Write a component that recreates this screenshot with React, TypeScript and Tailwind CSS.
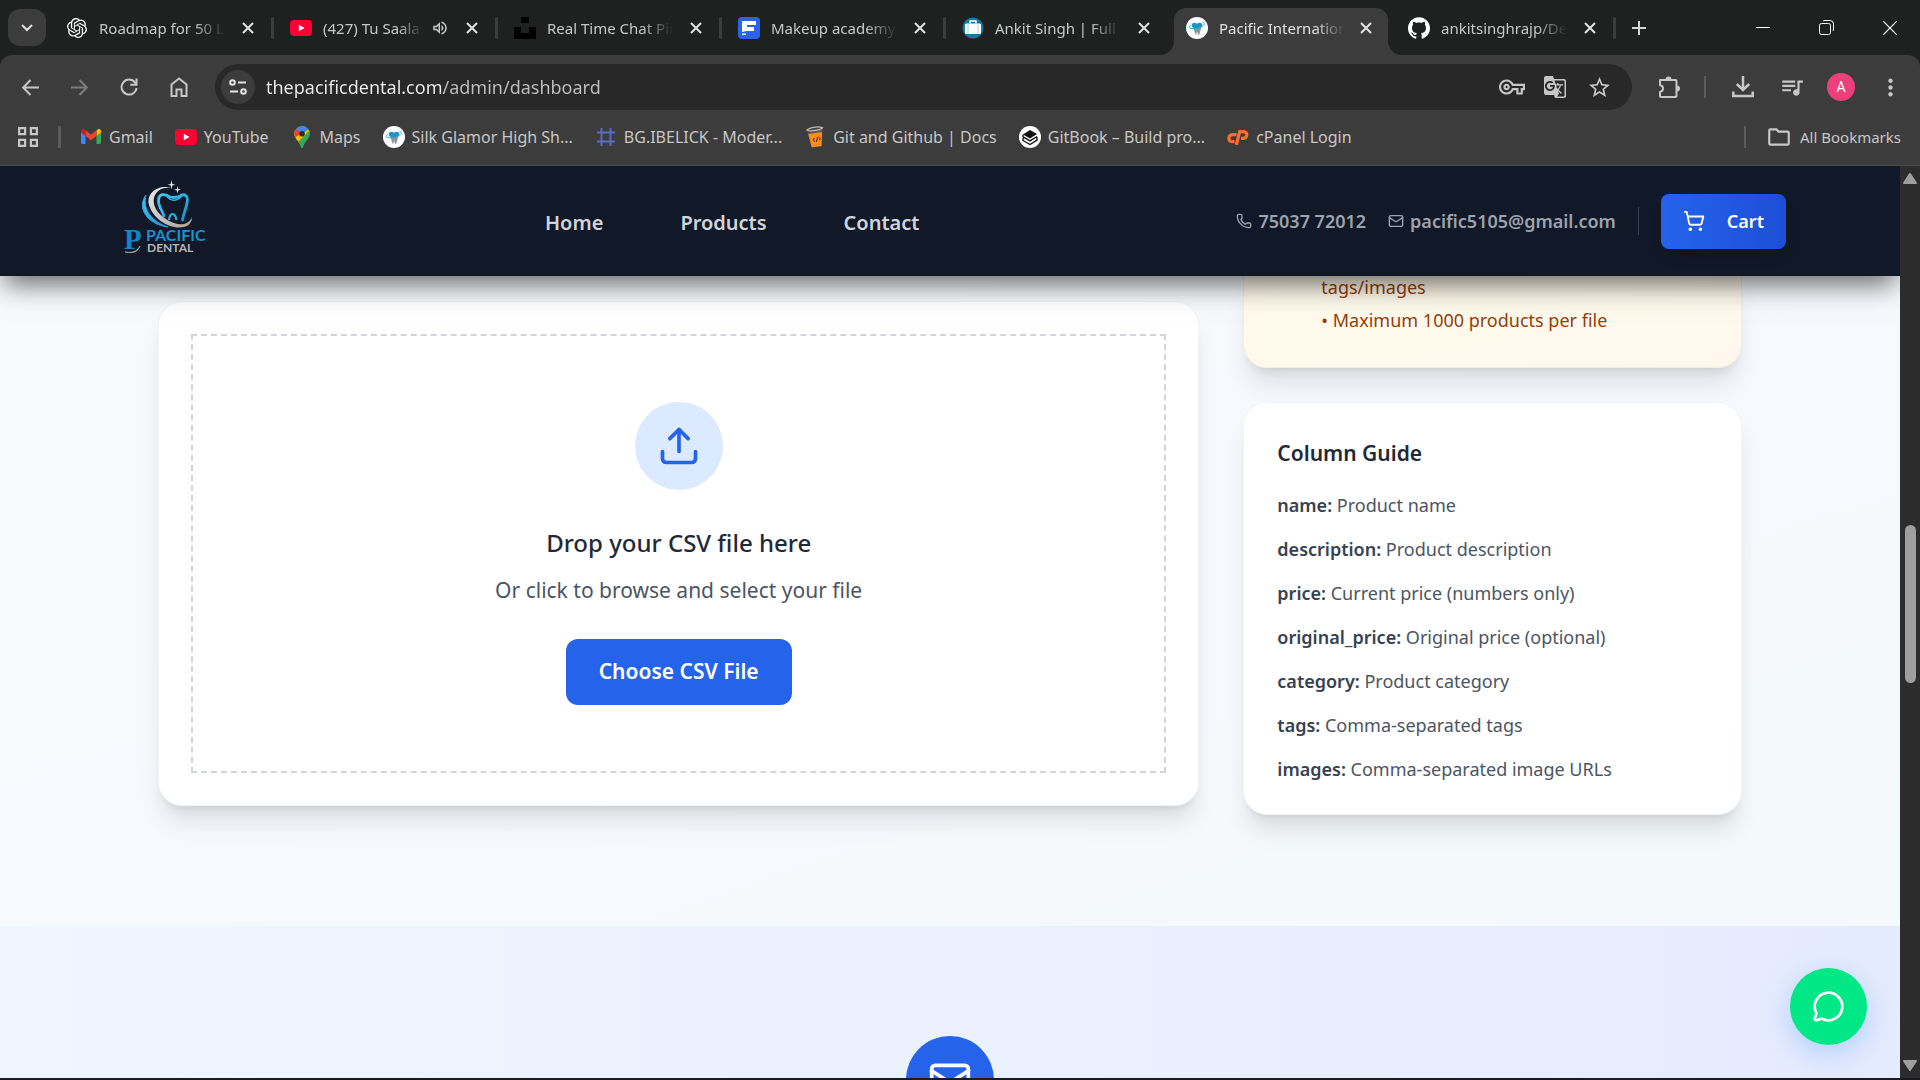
import type { ReactNode } from "react";
import { Mail, MessageCircle, Phone, ShoppingCart, Upload } from "lucide-react";
import {
  MdGTranslate,
  MdMoreVert,
  MdOutlineFolder,
  MdOutlineQueueMusic,
  MdOutlineVolumeUp,
  MdOutlineVpnKey,
  MdStarBorder,
} from "react-icons/md";
import { SiGithub, SiOpenai } from "react-icons/si";

function YouTubeIcon() {
  return (
    <svg viewBox="0 0 22 16" className="w-[22px]">
      <rect width="22" height="16" rx="4" fill="#ff0033" />
      <path d="M8.8 4.7v6.6L14.6 8z" fill="#fff" />
    </svg>
  );
}

function ToothIcon() {
  return (
    <svg viewBox="0 0 22 22" className="w-[22px]">
      <circle cx="11" cy="11" r="11" fill="#fff" />
      <path d="M7 9.500c1.500 1 6.500 1 8.500-.5-.4 3-1.200 5-2 8-.6 1.500-1.500 1-1.700-.5-.2-1.500-1-2-1.300 0-.1 1.600-1 1.500-1.300.2C8.700 14 7.400 12 7 9.500z" fill="#8f9499" />
      <path d="M6 9.500C5 5.800 8.200 5 11 6.700c2.800-1.700 6-.7 5.200 2-1.400 3.200-7.600 4-10.200.8z" fill="#2192c3" />
      <path d="M16.500 5.200c2 .5 2.400 1.800 1 3.200-2.500 2.500-9 4-13 3-1.800-.5-1.400-2 .6-3.200" fill="none" stroke="#2fa6d6" strokeWidth="1" />
    </svg>
  );
}

function UnsplashIcon() {
  return (
    <svg viewBox="0 0 22 22" className="w-[22px]">
      <path d="M7 0h8v6H7zM0 10h7v6h8v-6h7v12H0z" fill="#000" />
    </svg>
  );
}

function BlueFIcon() {
  return (
    <svg viewBox="0 0 22 22" className="w-[22px]">
      <rect width="22" height="22" rx="4" fill="#2f62ea" />
      <path d="M4 4h14v4H9v2h7v4H8.500L4 15zM4 16.500h4V18H4z" fill="#fff" />
    </svg>
  );
}

function BriefcaseIcon() {
  return (
    <svg viewBox="0 0 22 22" className="w-[22px]">
      <circle cx="11" cy="11" r="10.500" fill="#12799f" />
      <rect x="3" y="6.500" width="16" height="10.500" rx="1.500" fill="#fff" />
      <path d="M8 6.500V4h6v2.500" fill="none" stroke="#fff" strokeWidth="1.500" />
      <path d="M6 6.500V17M16 6.500V17" stroke="#8cc6de" strokeWidth="0.800" />
    </svg>
  );
}

function GmailIcon() {
  return (
    <svg viewBox="0 0 20 15" className="w-5">
      <path d="M0 2v11.500C0 14.400.6 15 1.500 15h3V7z" fill="#4285f4" />
      <path d="M20 2v11.500c0 .9-.6 1.500-1.500 1.500h-3V7z" fill="#34a853" />
      <path d="M15.500 1.300V7L20 3.600V2c0-1.800-2-2.500-3.300-1.500z" fill="#fbbc04" />
      <path d="M4.500 7V1.300L10 5.500l5.500-4.200V7L10 11.200z" fill="#ea4335" />
      <path d="M0 2v1.600L4.500 7V1.300L3.300.5C2-.5 0 .2 0 2z" fill="#c5221f" />
    </svg>
  );
}

function MapsIcon() {
  return (
    <svg viewBox="0 0 16 22" className="w-4">
      <defs>
        <clipPath id="pin">
          <path d="M8 0a7.700 7.700 0 0 1 7.700 7.700c0 5-5.200 7.300-6.700 13.300-.3 1.300-1.700 1.300-2 0C5.500 15 .3 12.700.3 7.700A7.700 7.700 0 0 1 8 0z" />
        </clipPath>
      </defs>
      <g clipPath="url(#pin)">
        <rect width="16" height="22" fill="#34a853" />
        <path d="M0 4L8 8 0 17z" fill="#fbbc04" />
        <path d="M16 2v3L5 17l-3-4z" fill="#fbbc04" />
        <path d="M16 4v18H7l-3-6z" fill="#34a853" />
        <path d="M0 12V2l4 1 4 4z" fill="#ea4335" />
        <path d="M2 3L8 0h6l1 2-7 6z" fill="#4285f4" />
      </g>
      <circle cx="8" cy="7.700" r="2.800" fill="#2b2b2b" />
    </svg>
  );
}

function HashIcon() {
  return (
    <svg viewBox="0 0 18 18" className="w-[18px]" fill="none" stroke="#5c6bc0" strokeWidth="2">
      <path d="M4.500 0v18M13.500 0v18M0 4.500h18M0 13.500h18" />
    </svg>
  );
}

function CupIcon() {
  return (
    <svg viewBox="0 0 18 22" className="w-[18px]">
      <path d="M1 4l4.500 17.500L16 20.500l.8-18.500z" fill="#57534e" />
      <path d="M2.300 8L16 6l-.5 14-9.700 1.300z" fill="#fb8c1e" />
      <path d="M1 4.200C3 1.500 12 0 16.700 1.700c-2 2.500-11 4-15.700 2.500z" fill="none" stroke="#bdbdbd" strokeWidth="1.200" />
      <path d="M8.500 12l-1.500 2 2 1.500M12.500 11l2 1.500-1.500 2M11.500 11l-1 5" fill="none" stroke="#4a2b0a" />
    </svg>
  );
}

function GitBookIcon() {
  return (
    <svg viewBox="0 0 22 22" className="w-[22px]">
      <circle cx="11" cy="11" r="11" fill="#fff" />
      <path d="M4 8.500L11 4l7 4-7 4.500z" fill="#111" />
      <path d="M4 8.500v2.300l7 4 7-4.300M4 12v2.500l7 4 7-4.300V11" fill="none" stroke="#111" strokeWidth="1.400" strokeLinejoin="round" />
    </svg>
  );
}

function CPanelIcon() {
  return (
    <svg viewBox="0 0 22 16" className="w-[22px]" fill="none" stroke="#ff6c2c" strokeWidth="3.200">
      <path d="M9.500 5.600H5.800C1 5.600 0.400 12.600 5 12.600h2.500" />
      <path d="M9.300 16L12.700 2.600H16.500C21.500 2.600 20.400 9.400 16 9.400h-2" />
    </svg>
  );
}

type Tab = { title: string; icon: ReactNode; audio?: boolean; active?: boolean; divider?: boolean };

const tabs: Tab[] = [
  { title: "Roadmap for 50 LPA", icon: <SiOpenai className="size-5 text-white" />, divider: true },
  { title: "(427) Tu Saala Kaam", icon: <YouTubeIcon />, audio: true, divider: true },
  { title: "Real Time Chat Pin", icon: <UnsplashIcon />, divider: true },
  { title: "Makeup academy site", icon: <BlueFIcon />, divider: true },
  { title: "Ankit Singh | Full Stack", icon: <BriefcaseIcon /> },
  { title: "Pacific International", icon: <ToothIcon />, active: true },
  { title: "ankitsinghrajp/Dental", icon: <SiGithub className="size-[22px] text-white" />, divider: true },
];

function CloseGlyph() {
  return (
    <svg viewBox="0 0 12 12" className="size-3" stroke="currentColor" strokeWidth="2" fill="none">
      <path d="M1 1l10 10M11 1L1 11" />
    </svg>
  );
}

function Flare({ side }: { side: "left" | "right" }) {
  return (
    <svg
      viewBox="0 0 14 14"
      className={side === "left" ? "absolute -left-3.5 bottom-0 size-3.5" : "absolute -right-3.5 bottom-0 size-3.5"}
      fill="#3c3c3c"
    >
      <path d={side === "left" ? "M14 0v14H0A14 14 0 0 0 14 0z" : "M0 0v14h14A14 14 0 0 1 0 0z"} />
    </svg>
  );
}

function BrowserTab({ tab }: { tab: Tab }) {
  return (
    <div className={tab.active ? "relative h-[47px] w-[222px]" : "relative h-[47px] w-56"}>
      {tab.active && (
        <div className="absolute inset-y-0 right-1 left-1 rounded-t-xl bg-[#3c3c3c]">
          <Flare side="left" />
          <Flare side="right" />
        </div>
      )}
      <div className="relative flex h-full items-center pb-2 pl-4 text-[#c7c7c7]">
        <span className="flex w-[22px] shrink-0 justify-center">{tab.icon}</span>
        <span
          className={
            (tab.audio ? "w-[100px] " : "w-[126px] ") +
            (tab.active ? "text-[#e3e3e3] " : "") +
            "ml-[11px] shrink-0 overflow-hidden whitespace-nowrap [mask-image:linear-gradient(to_right,black_75%,transparent)]"
          }
        >
          {tab.title}
        </span>
        {tab.audio && <MdOutlineVolumeUp className="ml-2 size-[18px] shrink-0" />}
        <button aria-label={"Close " + tab.title} className="absolute right-5 text-[#e3e3e3]">
          <CloseGlyph />
        </button>
        {tab.divider && <span className="absolute right-0 h-[22px] w-[3px] rounded-full bg-[#3c3c3c]" />}
      </div>
    </div>
  );
}

function TabStrip() {
  return (
    <div className="flex h-[55px] items-end bg-[#1f2120] pl-2">
      <button aria-label="Search tabs" className="mb-[9px] flex h-[37px] w-[38px] items-center justify-center rounded-xl bg-[#3c3c3c] text-[#e3e3e3]">
        <svg viewBox="0 0 12 8" className="w-3" fill="none" stroke="currentColor" strokeWidth="2">
          <path d="M1 1l5 5 5-5" />
        </svg>
      </button>
      <div className="ml-1 flex">
        {tabs.map((tab) => (
          <BrowserTab key={tab.title} tab={tab} />
        ))}
      </div>
      <button aria-label="New tab" className="mb-[19px] ml-[15px] text-[#d6d6d6]">
        <svg viewBox="0 0 16 16" className="size-4" stroke="currentColor" strokeWidth="2">
          <path d="M8 1v14M1 8h14" />
        </svg>
      </button>
      <div className="mr-[23px] mb-5 ml-auto flex items-center gap-[49px] text-white">
        <button aria-label="Minimize">
          <svg viewBox="0 0 14 14" className="size-3.5" stroke="currentColor">
            <path d="M0 6.500h14" />
          </svg>
        </button>
        <button aria-label="Restore">
          <svg viewBox="0 0 15 15" className="size-[15px]" fill="none" stroke="currentColor">
            <rect x="0.500" y="3.500" width="11" height="11" rx="2" />
            <path d="M4 1.200Q4.500.5 6 .5h5q3.500 0 3.500 3.500v5q0 1.500-.7 2" />
          </svg>
        </button>
        <button aria-label="Close window">
          <svg viewBox="0 0 14 14" className="size-3.5" stroke="currentColor" strokeWidth="1.200">
            <path d="M0 0l14 14M14 0L0 14" />
          </svg>
        </button>
      </div>
    </div>
  );
}

function Toolbar() {
  return (
    <div className="flex h-[62px] items-center pt-0.5 pr-6 pl-[22px] text-[#c7c7c7]">
      <button aria-label="Back" className="mr-8">
        <svg viewBox="0 0 17 17" className="size-[17px]" fill="none" stroke="currentColor" strokeWidth="2">
          <path d="M17 8.500H2M8.500 1L1.200 8.500l7.300 7.500" />
        </svg>
      </button>
      <button aria-label="Forward" className="mr-8 text-[#7c7c7c]">
        <svg viewBox="0 0 17 17" className="size-[17px]" fill="none" stroke="currentColor" strokeWidth="2">
          <path d="M0 8.500h15M8.500 1l7.300 7.500L8.500 16" />
        </svg>
      </button>
      <button aria-label="Reload" className="mr-8">
        <svg viewBox="0 0 18 18" className="size-[18px]" fill="none" stroke="currentColor" strokeWidth="2">
          <path d="M16.500 10A7.500 7.500 0 1 1 15 4.500l1.300 1.500" />
          <path d="M16.500 0.500v6.300h-6.300" />
        </svg>
      </button>
      <button aria-label="Home" className="mr-[27px]">
        <svg viewBox="0 0 18 20" className="w-[18px]" fill="none" stroke="currentColor" strokeWidth="2">
          <path d="M1.500 7.500L9 1.500l7.500 6V19h-5v-6.500h-5V19h-5z" />
        </svg>
      </button>
      <div className="flex h-[46px] flex-1 items-center rounded-full bg-[#282828] pr-5 pl-1.5">
        <button aria-label="Site information" className="flex size-[34px] items-center justify-center rounded-full bg-[#3c3c3c] text-[#e3e3e3]">
          <svg viewBox="0 0 18 16" className="w-[18px]" fill="none" stroke="currentColor" strokeWidth="2">
            <circle cx="3.500" cy="3.500" r="2.300" />
            <circle cx="14.500" cy="12.500" r="2.300" />
            <path d="M9 3.500h8M1 12.500h8" />
          </svg>
        </button>
        <div className="ml-[11px] flex-1 text-lg leading-6">
          <input
            aria-label="Address"
            defaultValue="thepacificdental.com/admin/dashboard"
            className="w-full bg-linear-to-r from-[#f0f0f0] from-[178px] to-[#c0c0c0] to-[178px] bg-clip-text text-transparent outline-none"
          />
        </div>
        <button aria-label="Passwords">
          <MdOutlineVpnKey className="size-[26px]" />
        </button>
        <button aria-label="Translate" className="ml-[18px]">
          <MdGTranslate className="size-[24px]" />
        </button>
        <button aria-label="Bookmark this page" className="ml-5">
          <MdStarBorder className="size-[25px]" />
        </button>
      </div>
      <button aria-label="Extensions" className="ml-[26px]">
        <svg viewBox="0 0 22 22" className="size-[22px]" fill="none" stroke="currentColor" strokeWidth="2">
          <path d="M2 4h15.500q1 0 1 1v15q0 1-1 1H3q-1 0-1-1v-4c4-1 4-6 0-7V4z" strokeLinejoin="round" />
          <path d="M7.500 3.500a3 3 0 0 1 6 0zM19 9.500a3 3 0 0 1 0 6z" fill="currentColor" stroke="none" />
        </svg>
      </button>
      <span className="ml-6 h-[22px] w-0.5 bg-[#5c5c5c]" />
      <button aria-label="Downloads" className="ml-[26px]">
        <svg viewBox="0 0 22 22" className="size-[22px]" fill="none" stroke="currentColor" strokeWidth="2.500">
          <path d="M11 0v13.500M4.800 8l6.200 6 6.200-6M1.300 15.500V20h19.400v-4.500" />
        </svg>
      </button>
      <button aria-label="Media controls" className="ml-[25px]">
        <MdOutlineQueueMusic className="size-[26px]" />
      </button>
      <button aria-label="Profile" className="ml-[22px] flex size-7 items-center justify-center rounded-full bg-[#ec407a] font-[Roboto] text-sm text-white">
        A
      </button>
      <button aria-label="More" className="ml-[22px] -mr-2">
        <MdMoreVert className="size-[27px]" />
      </button>
    </div>
  );
}

const bookmarks: { label: string; icon: ReactNode }[] = [
  { label: "Gmail", icon: <GmailIcon /> },
  { label: "YouTube", icon: <YouTubeIcon /> },
  { label: "Maps", icon: <MapsIcon /> },
  { label: "Silk Glamor High Sh...", icon: <ToothIcon /> },
  { label: "BG.IBELICK - Moder...", icon: <HashIcon /> },
  { label: "Git and Github | Docs", icon: <CupIcon /> },
  { label: "GitBook – Build pro...", icon: <GitBookIcon /> },
  { label: "cPanel Login", icon: <CPanelIcon /> },
];

function BookmarksBar() {
  return (
    <div className="flex h-[49px] items-center border-b border-[#4d4d4d] pr-[19px] pb-[9px] pl-[18px] text-base leading-5 text-[#c7c7c7]">
      <button aria-label="Apps">
        <svg viewBox="0 0 20 20" className="size-5" fill="none" stroke="currentColor" strokeWidth="2.200">
          <path d="M1.100 1.100h6v6h-6zM12.900 1.100h6v6h-6zM1.100 12.900h6v6h-6zM12.900 12.900h6v6h-6z" />
        </svg>
      </button>
      <span className="ml-5 h-[22px] w-[3px] bg-[#5c5c5c]" />
      <nav className="ml-[19px] flex gap-[22px]">
        {bookmarks.map((b) => (
          <a key={b.label} href="#" className="flex items-center gap-[7px] whitespace-nowrap">
            <span className="flex w-[22px] justify-center">{b.icon}</span>
            {b.label}
          </a>
        ))}
      </nav>
      <span className="ml-auto h-[22px] w-0.5 bg-[#5c5c5c]" />
      <a href="#" className="ml-5 flex items-center gap-2 whitespace-nowrap text-[15px]">
        <MdOutlineFolder className="size-[26px]" />
        All Bookmarks
      </a>
    </div>
  );
}

function Logo() {
  return (
    <svg viewBox="0 0 100 90" className="mb-2 h-[90px] w-[100px]" role="img" aria-label="Pacific Dental">
      <defs>
        <linearGradient id="tooth" x1="0" y1="0" x2="1" y2="1">
          <stop offset="0" stopColor="#45c8f0" />
          <stop offset="1" stopColor="#1c8fd0" />
        </linearGradient>
        <linearGradient id="silver" x1="0" y1="0" x2="1" y2="1">
          <stop offset="0" stopColor="#e8e8e8" />
          <stop offset="1" stopColor="#a3a3a3" />
        </linearGradient>
      </defs>
      <path d="M32 23C23 34 31 52 54 55 39 50 28 38 32 23z" fill="url(#tooth)" stroke="#2b9fdb" strokeWidth="1" />
      <path d="M58 16C44 12 32 21 35 33 39 47 56 58 70 55 75 54 78 50 78 45 75 52 68 54 60 51 47 46 38 36 40 26 42 18 49 15 58 16z" fill="url(#silver)" />
      <path
        d="M50 44C48 38 44 34 44.500 28 45 21 51 22 55 24.500 60 26.500 63 25.500 66 24 71 21 74.500 24 73 31 72 37 69.500 42 68.500 48"
        fill="none"
        stroke="url(#tooth)"
        strokeWidth="2.800"
        strokeLinecap="round"
      />
      <path d="M53 25q7 7 15-1" fill="none" stroke="#2eb3e6" strokeWidth="1.500" />
      <path d="M55 48c1-8 6-8 7.500 0" fill="none" stroke="#2eb3e6" strokeWidth="2.200" />
      <path d="M57.500 8l.8 4 3.200.8-3.200.8-.8 4-.8-4-3.200-.8 3.200-.8zM63.500 14l.7 3 2.800.7-2.800.7-.7 3-.7-3-2.800-.7 2.800-.7z" fill="#e5e5e5" />
      <text x="10" y="77" fontFamily="Liberation Serif, serif" fontWeight="700" fontSize="29" fill="#1583c6">
        P
      </text>
      <path d="M11 80q11 2 15-6-3 9-15 6z" fill="#b5b5b5" stroke="#b5b5b5" strokeWidth="0.600" />
      <text x="32" y="69" fontFamily="Lato, sans-serif" fontWeight="700" fontSize="16" fill="#1e8fd0">
        PACIFIC
      </text>
      <text x="33" y="80" fontFamily="Lato, sans-serif" fontWeight="700" fontSize="12" fill="#b5b5b5">
        DENTAL
      </text>
    </svg>
  );
}

function SiteHeader() {
  return (
    <header className="relative z-10 bg-[#111827] px-[114px] shadow-[0_12px_26px_-4px_rgba(0,0,0,0.6)]">
      <div className="flex h-[110px] items-center justify-between">
        <a href="#">
          <Logo />
        </a>
        <nav className="mt-1 ml-3.5 flex gap-[77px] text-xl font-semibold text-[#d1d5db]">
          <a href="#">Home</a>
          <a href="#">Products</a>
          <a href="#">Contact</a>
        </nav>
        <div className="flex items-center text-lg font-semibold text-[#9ca3af]">
          <a href="tel:7503772012" className="flex items-center gap-1.5">
            <Phone className="size-4" strokeWidth={2} />
            75037 72012
          </a>
          <a href="mailto:pacific5105@gmail.com" className="ml-[22px] flex items-center gap-1.5">
            <Mail className="size-4" strokeWidth={2} />
            pacific5105@gmail.com
          </a>
          <span className="ml-[22px] h-7 w-px bg-[#374151]" />
          <button className="ml-[22px] flex h-[55px] items-center gap-[22px] rounded-lg bg-linear-to-r from-[#2563eb] to-[#1d4ed8] px-[22px] text-white shadow-lg">
            <ShoppingCart className="size-[22px]" />
            Cart
          </button>
        </div>
      </div>
    </header>
  );
}

const columns = [
  ["name:", "Product name"],
  ["description:", "Product description"],
  ["price:", "Current price (numbers only)"],
  ["original_price:", "Original price (optional)"],
  ["category:", "Product category"],
  ["tags:", "Comma-separated tags"],
  ["images:", "Comma-separated image URLs"],
];

function UploadCard() {
  return (
    <section className="col-span-2 mt-[25px] self-start rounded-3xl border border-[#f3f4f6] bg-white p-8 shadow-xl">
      <div className="flex flex-col items-center border-2 border-dashed border-[#d1d5db] px-8 py-[66px]">
        <div className="flex size-[88px] items-center justify-center rounded-full bg-[#dbeafe]">
          <Upload className="size-11 text-[#2563eb]" />
        </div>
        <h3 className="mt-[35px] text-2xl leading-9 font-medium text-[#1f2937]">Drop your CSV file here</h3>
        <p className="mt-[15px] text-[21px] leading-7 text-[#4b5563]">Or click to browse and select your file</p>
        <button className="mt-[35px] h-[66px] rounded-xl bg-[#2563eb] px-[33px] text-[21px] font-semibold text-white">Choose CSV File</button>
      </div>
    </section>
  );
}

function SideColumn() {
  return (
    <aside className="flex flex-col gap-[34px]">
      <section className="rounded-b-3xl border border-t-0 border-[#f3eee2] bg-linear-to-br from-[#fffbeb] to-[#fff7ed] pr-8 pb-[34px] pl-[77px] text-lg leading-[26px] text-[#92400e] shadow-xl">
        <p className="-mt-0.5">tags/images</p>
        <p className="mt-[7px]">• Maximum 1000 products per file</p>
      </section>
      <section className="rounded-3xl border border-[#f3f4f6] bg-white px-[33px] pt-[34px] pb-[31px] shadow-xl">
        <h3 className="text-[21px] leading-8 font-semibold text-[#1f2937]">Column Guide</h3>
        <ul className="mt-[22px] flex flex-col gap-4 text-lg leading-7 text-[#4b5563]">
          {columns.map(([key, text]) => (
            <li key={key}>
              <strong className="font-semibold text-[#374151]">{key}</strong> {text}
            </li>
          ))}
        </ul>
      </section>
    </aside>
  );
}

function ScrollBar() {
  return (
    <div className="flex w-5 shrink-0 flex-col items-center bg-[#2c2c2c] py-[7px]">
      <svg viewBox="0 0 14 11" className="w-3.5" fill="#9f9f9f" stroke="#9f9f9f" strokeWidth="2" strokeLinejoin="round">
        <path d="M7 1l6 9H1z" />
      </svg>
      <div className="flex-[342] basis-0" />
      <div className="w-[11px] flex-[158] basis-0 rounded-full bg-[#9f9f9f]" />
      <div className="flex-[378] basis-0" />
      <svg viewBox="0 0 14 11" className="w-3.5" fill="#9f9f9f" stroke="#9f9f9f" strokeWidth="2" strokeLinejoin="round">
        <path d="M7 10l6-9H1z" />
      </svg>
    </div>
  );
}

export default function App() {
  return (
    <div className="flex h-screen flex-col overflow-hidden border-b-2 border-[#1c1a1e] font-['Noto_Sans','Open_Sans',sans-serif]">
      <div className="bg-[#1f2120] text-[15px] leading-5">
        <TabStrip />
        <div className="rounded-t-xl bg-[#3c3c3c]">
          <Toolbar />
          <BookmarksBar />
        </div>
      </div>
      <div className="flex min-h-0 flex-1">
        <div className="relative flex min-w-0 flex-1 flex-col overflow-hidden">
          <SiteHeader />
          <main className="bg-linear-to-br from-[#f8f9fd] to-[#f4f9fc] px-[158px] pb-[111px]">
            <div className="mx-auto grid max-w-[1584px] grid-cols-3 gap-11">
              <UploadCard />
              <SideColumn />
            </div>
          </main>
          <section className="flex min-h-0 flex-1 flex-col items-center overflow-hidden bg-linear-to-r from-[#eff6ff] to-[#e5ebfe] pt-[110px]">
            <div className="flex size-[88px] shrink-0 items-center justify-center rounded-full bg-[#2563eb] text-white">
              <Mail className="size-11" />
            </div>
          </section>
          <button
            aria-label="Open chat"
            className="absolute right-[33px] bottom-[33px] flex size-[77px] items-center justify-center rounded-full bg-[#00e785] text-white shadow-[0_8px_28px_rgba(96,165,250,0.4)]"
          >
            <MessageCircle className="size-[33px]" />
          </button>
        </div>
        <ScrollBar />
      </div>
    </div>
  );
}
